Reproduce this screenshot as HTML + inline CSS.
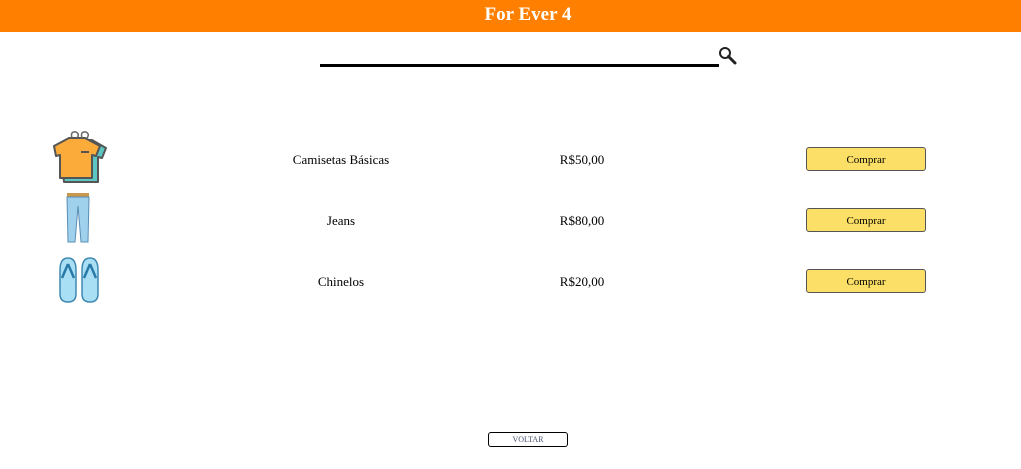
<!DOCTYPE html>
<html><head><meta charset="utf-8"><style>
body{margin:0;width:1021px;height:469px;background:#fff;font-family:"Liberation Serif",serif;position:relative;overflow:hidden}
.hdr{position:absolute;left:0;top:0;width:1021px;height:32px;background:#ff8000;color:#fff;font-weight:bold;font-size:19px;text-align:center;line-height:29px}
.hdr span{position:absolute;left:528px;transform:translateX(-50%);white-space:nowrap}
.line{position:absolute;left:320px;top:64px;width:399px;height:3px;background:#000}
.t{position:absolute;font-size:13px;color:#000;transform:translateX(-50%);white-space:nowrap}
.btn{position:absolute;left:806px;width:118px;height:22px;background:#fbdf66;border:1px solid #555;border-radius:3px;font-size:11px;text-align:center;line-height:25px}
.v{position:absolute;left:488px;top:432px;width:78px;height:13px;border:1px solid #000;border-radius:3px;font-size:8px;color:#4a5070;text-align:center;line-height:14px}
</style></head><body>
<div class="hdr"><span>For Ever 4</span></div>
<div class="line"></div>
<svg style="position:absolute;left:716px;top:45px" width="24" height="22" viewBox="0 0 24 22"><circle cx="9" cy="8" r="5" fill="#fff" stroke="#222" stroke-width="2"/><line x1="12.5" y1="11.5" x2="19" y2="18" stroke="#222" stroke-width="3" stroke-linecap="round"/></svg>
<svg style="position:absolute;left:52px;top:130px" width="56" height="54" viewBox="0 0 56 54">
<path d="M8 16 L24 10 L40 10 L54 18 L50 28 L46 27 L46 52 L12 52 Z" fill="#5cc6c4" stroke="#555" stroke-width="2" stroke-linejoin="round"/>
<path d="M2 16 L17 8 L33 8 L48 16 L44 26 L40 25 L40 48 L8 48 L8 25 L4 26 Z" fill="#fbab3a" stroke="#555" stroke-width="2" stroke-linejoin="round"/>
<path d="M20 8 Q18 1 24 2 Q28 4 25 8 M30 8 Q28 1 34 2 Q38 4 35 8" fill="none" stroke="#666" stroke-width="1.5"/>
<rect x="29" y="21" width="8" height="2" fill="#555"/></svg>
<svg style="position:absolute;left:64px;top:192px" width="28" height="52" viewBox="0 0 28 52">
<rect x="3" y="1" width="22" height="4" fill="#c9974d"/>
<path d="M3 5 L25 5 L24 50 L17 50 L14 14 L11 50 L4 50 Z" fill="#9fd0ec" stroke="#5a8db5" stroke-width="1"/></svg>
<svg style="position:absolute;left:58px;top:256px" width="42" height="48" viewBox="0 0 42 48">
<path d="M10 2 Q18 2 18 14 L18 38 Q18 46 10 46 Q2 46 2 38 L2 14 Q2 2 10 2Z" fill="#a9dff5" stroke="#3f88b0" stroke-width="1.5"/>
<path d="M32 2 Q40 2 40 14 L40 38 Q40 46 32 46 Q24 46 24 38 L24 14 Q24 2 32 2Z" fill="#a9dff5" stroke="#3f88b0" stroke-width="1.5"/>
<path d="M10 8 L4 22 M10 8 L16 22 M32 8 L26 22 M32 8 L38 22" stroke="#2a7aa8" stroke-width="2.5"/></svg>
<div class="t" style="left:341px;top:152px">Camisetas Básicas</div>
<div class="t" style="left:582px;top:152px">R$50,00</div>
<div class="btn" style="top:147px">Comprar</div>
<div class="t" style="left:341px;top:213px">Jeans</div>
<div class="t" style="left:582px;top:213px">R$80,00</div>
<div class="btn" style="top:208px">Comprar</div>
<div class="t" style="left:341px;top:274px">Chinelos</div>
<div class="t" style="left:582px;top:274px">R$20,00</div>
<div class="btn" style="top:269px">Comprar</div>
<div class="v">VOLTAR</div>
</body></html>
